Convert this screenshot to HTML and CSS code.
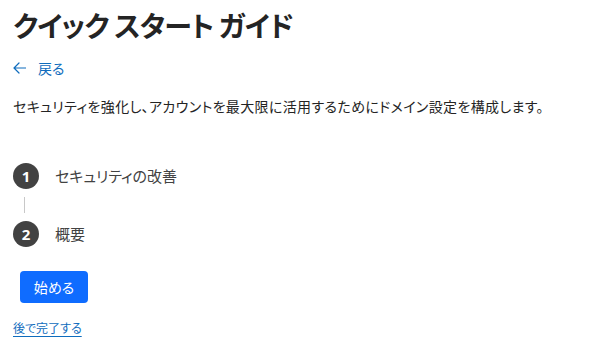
FILE: index.html
```html
<!DOCTYPE html>
<html lang="ja">
<head>
<meta charset="utf-8">
<link rel="stylesheet" href="styles.css">
</head>
<body>
<main class="page">
  <h1 class="title">クイック スタート ガイド</h1>
  <a class="back" href="#">
    <svg class="back-icon" width="13" height="12" viewBox="0 0 13 12" aria-hidden="true"><path d="M6 1 1 6l5 5M1 6h11.5" fill="none" stroke="currentColor" stroke-width="1.2" stroke-linecap="round" stroke-linejoin="round"/></svg>
    <span>戻る</span>
  </a>
  <p class="desc">セキュリティを強化し、アカウントを最大限に活用するためにドメイン設定を構成します。</p>
  <ol class="steps">
    <li class="step"><span class="num">1</span><span class="label">セキュリティの改善</span></li>
    <li class="connector"></li>
    <li class="step"><span class="num">2</span><span class="label">概要</span></li>
  </ol>
  <button class="start" type="button">始める</button>
  <a class="later" href="#">後で完了する</a>
</main>
</body>
</html>
```
FILE: styles.css
```css
html, body { margin: 0; padding: 0; background: #fff; }
body {
  font-family: "Noto Sans CJK JP", "Noto Sans", sans-serif;
  font-feature-settings: "palt";
  color: #242424;
}
.page {
  padding: 0 0 0 13px;
  display: flex;
  flex-direction: column;
  align-items: flex-start;
}
.title {
  margin: 0;
  padding-top: 4px;
  font-size: 28px;
  font-weight: 700;
  line-height: 42px;
  letter-spacing: -0.8px;
  color: #242424;
}
.back {
  margin-top: 12px;
  display: flex;
  align-items: center;
  gap: 12px;
  color: #0f6cbd;
  text-decoration: none;
  font-size: 14px;
  line-height: 20px;
}
.back-icon { display: block; }
.desc {
  margin: 18px 0 0;
  font-size: 14px;
  line-height: 20px;
  letter-spacing: 0.35px;
}
.steps {
  list-style: none;
  margin: 47px 0 0;
  padding: 0;
  display: flex;
  flex-direction: column;
}
.step {
  display: flex;
  align-items: center;
  gap: 16px;
}
.num {
  width: 26px;
  height: 26px;
  border-radius: 50%;
  background: #424242;
  color: #fff;
  font-family: "Noto Sans", sans-serif;
  font-weight: 700;
  font-size: 15px;
  display: flex;
  align-items: center;
  justify-content: center;
}
.label {
  font-size: 15px;
  line-height: 20px;
  color: #424242;
}
.connector {
  width: 1px;
  height: 16px;
  margin: 8px 0 8px 11px;
  background: #c8c8c8;
}
.start {
  margin: 24px 0 0 7px;
  width: 68px;
  height: 32px;
  border: 0;
  border-radius: 4px;
  background: #0f6cff;
  color: #fff;
  font-family: inherit;
  font-feature-settings: "palt";
  font-size: 14px;
  padding: 0;
  cursor: pointer;
}
.later {
  margin-top: 16px;
  font-size: 12px;
  line-height: 18px;
  color: #0f6cbd;
  text-decoration: underline;
  text-underline-offset: 3px;
}
```
